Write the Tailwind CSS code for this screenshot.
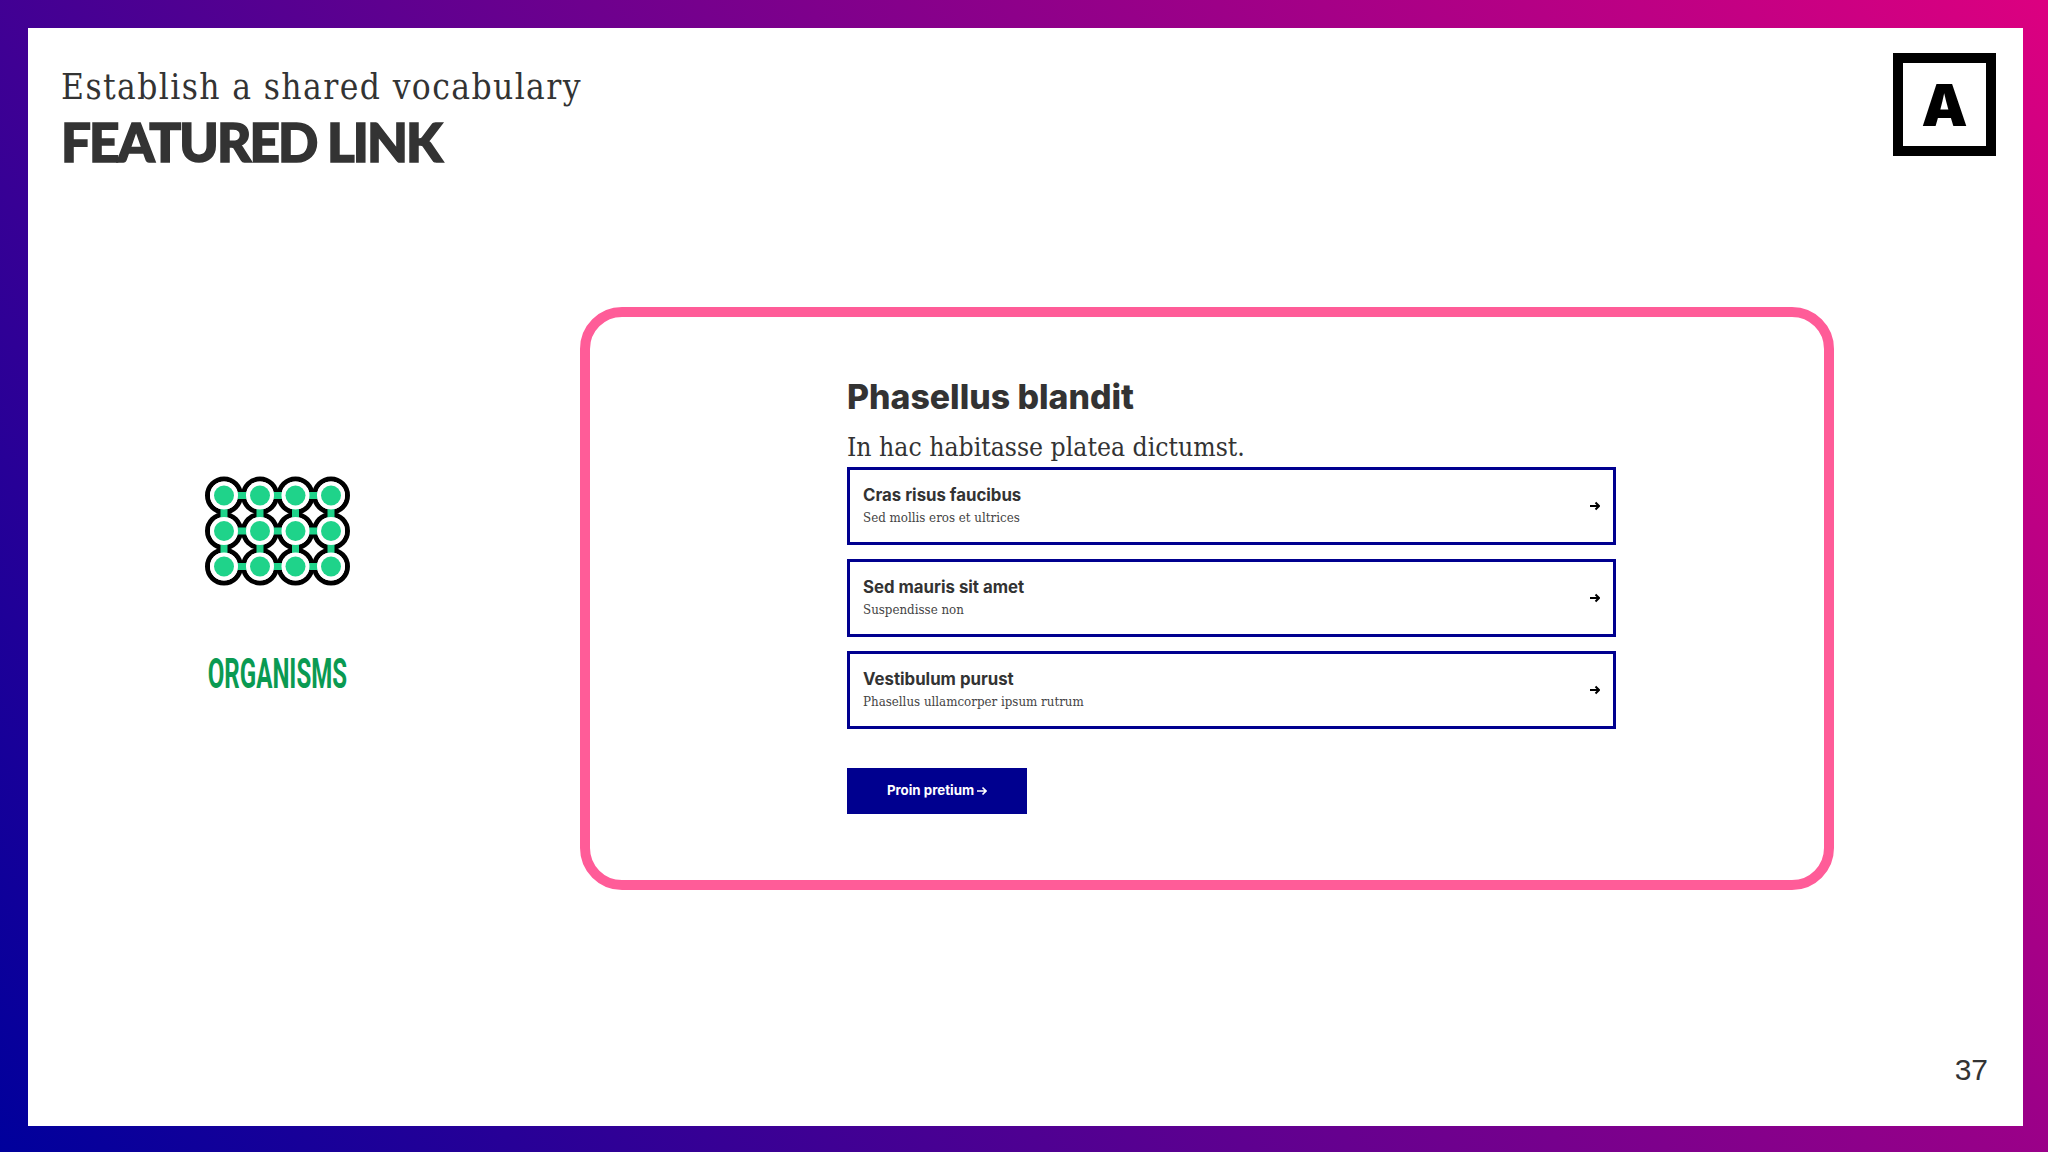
<!DOCTYPE html>
<html>
<head>
<meta charset="utf-8">
<script src="https://cdn.jsdelivr.net/npm/@tailwindcss/browser@4"></script>
</head>
<body class="m-0">
<div class="w-[2048px] h-[1152px] overflow-hidden pt-[28px] pl-[28px] pr-[25px] pb-[26px] bg-[linear-gradient(53deg,#00009c,#dc0080)]">
  <div class="h-full bg-white flex flex-col font-['Liberation_Sans',sans-serif]">
    <header class="h-[128px] flex justify-between items-start pl-[33px] pr-[27px] pt-[25px]">
      <div class="pt-[14px]">
        <p class="font-['DejaVu_Serif_Condensed','DejaVu_Serif',serif] text-[35px] leading-[40px] tracking-[1.4px] text-[#333333]">Establish a shared vocabulary</p>
        <h1 class="font-['Lato',sans-serif] font-black text-[53px] leading-[60px] tracking-[-1.9px] [-webkit-text-stroke:1.5px_#333333] text-[#333333] mt-[5px]">FEATURED LINK</h1>
      </div>
      <div class="w-[103px] h-[103px] border-[10px] border-black flex items-center justify-center font-['Inter',sans-serif] font-black text-[58px] leading-none text-black">A</div>
    </header>
    <main class="flex items-start mt-[151px]">
      <div class="w-[498px] flex flex-col items-center pt-[169px]">
        <svg class="w-[147px] h-[110px]" viewBox="0 0 147 110">
          <g fill="none" stroke="black" stroke-width="5">
            <circle cx="20" cy="19.5" r="16.5"/><circle cx="56" cy="19.5" r="16.5"/><circle cx="91.5" cy="19.5" r="16.5"/><circle cx="127" cy="19.5" r="16.5"/>
            <circle cx="20" cy="55" r="16.5"/><circle cx="56" cy="55" r="16.5"/><circle cx="91.5" cy="55" r="16.5"/><circle cx="127" cy="55" r="16.5"/>
            <circle cx="20" cy="90.5" r="16.5"/><circle cx="56" cy="90.5" r="16.5"/><circle cx="91.5" cy="90.5" r="16.5"/><circle cx="127" cy="90.5" r="16.5"/>
          </g>
          <g stroke="#1fd38a" stroke-width="7">
            <path d="M20 19.5H127M20 55H127M20 90.5H127M20 19.5V90.5M56 19.5V90.5M91.5 19.5V90.5M127 19.5V90.5"/>
          </g>
          <g fill="white">
            <circle cx="20" cy="19.5" r="14"/><circle cx="56" cy="19.5" r="14"/><circle cx="91.5" cy="19.5" r="14"/><circle cx="127" cy="19.5" r="14"/>
            <circle cx="20" cy="55" r="14"/><circle cx="56" cy="55" r="14"/><circle cx="91.5" cy="55" r="14"/><circle cx="127" cy="55" r="14"/>
            <circle cx="20" cy="90.5" r="14"/><circle cx="56" cy="90.5" r="14"/><circle cx="91.5" cy="90.5" r="14"/><circle cx="127" cy="90.5" r="14"/>
          </g>
          <g fill="#1fd38a">
            <circle cx="20" cy="19.5" r="10"/><circle cx="56" cy="19.5" r="10"/><circle cx="91.5" cy="19.5" r="10"/><circle cx="127" cy="19.5" r="10"/>
            <circle cx="20" cy="55" r="10"/><circle cx="56" cy="55" r="10"/><circle cx="91.5" cy="55" r="10"/><circle cx="127" cy="55" r="10"/>
            <circle cx="20" cy="90.5" r="10"/><circle cx="56" cy="90.5" r="10"/><circle cx="91.5" cy="90.5" r="10"/><circle cx="127" cy="90.5" r="10"/>
          </g>
        </svg>
        <p class="font-['Roboto',sans-serif] font-bold text-[43px] leading-[50px] text-[#0a9a52] mt-[62px] scale-x-[0.56]">ORGANISMS</p>
      </div>
      <section class="ml-[54px] w-[1254px] h-[583px] border-[10px] border-[#ff5c98] rounded-[42px] pl-[257px] pt-[60px]">
        <h2 class="font-['Inter',sans-serif] font-extrabold text-[33.8px] leading-[40px] text-[#333333]">Phasellus blandit</h2>
        <p class="font-['DejaVu_Serif_Condensed','DejaVu_Serif',serif] text-[26.3px] leading-[32px] text-[#333333] mt-[14px] mb-[4px]">In hac habitasse platea dictumst.</p>
        <ul class="w-[769px] flex flex-col gap-[14px]">
          <li class="h-[78px] border-[3.5px] border-[#00008f] flex items-center justify-between pl-[13px] pr-[13px]">
            <div class="pb-[1px]"><p class="font-['Inter',sans-serif] font-bold text-[16.8px] leading-[22px] text-[#333333]">Cras risus faucibus</p><p class="font-['DejaVu_Serif_Condensed','DejaVu_Serif',serif] text-[13.2px] leading-[20px] text-[#444444] mt-[2px]">Sed mollis eros et ultrices</p></div>
            <svg class="w-[10px] h-[10px]" viewBox="0 0 10 10" fill="none" stroke="black" stroke-width="2"><path d="M0 5H9M5.5 1.5L9 5L5.5 8.5"/></svg>
          </li>
          <li class="h-[78px] border-[3.5px] border-[#00008f] flex items-center justify-between pl-[13px] pr-[13px]">
            <div class="pb-[1px]"><p class="font-['Inter',sans-serif] font-bold text-[16.8px] leading-[22px] text-[#333333]">Sed mauris sit amet</p><p class="font-['DejaVu_Serif_Condensed','DejaVu_Serif',serif] text-[13.2px] leading-[20px] text-[#444444] mt-[2px]">Suspendisse non</p></div>
            <svg class="w-[10px] h-[10px]" viewBox="0 0 10 10" fill="none" stroke="black" stroke-width="2"><path d="M0 5H9M5.5 1.5L9 5L5.5 8.5"/></svg>
          </li>
          <li class="h-[78px] border-[3.5px] border-[#00008f] flex items-center justify-between pl-[13px] pr-[13px]">
            <div class="pb-[1px]"><p class="font-['Inter',sans-serif] font-bold text-[16.8px] leading-[22px] text-[#333333]">Vestibulum purust</p><p class="font-['DejaVu_Serif_Condensed','DejaVu_Serif',serif] text-[13.2px] leading-[20px] text-[#444444] mt-[2px]">Phasellus ullamcorper ipsum rutrum</p></div>
            <svg class="w-[10px] h-[10px]" viewBox="0 0 10 10" fill="none" stroke="black" stroke-width="2"><path d="M0 5H9M5.5 1.5L9 5L5.5 8.5"/></svg>
          </li>
        </ul>
        <div class="mt-[39px] w-[180px] h-[46px] bg-[#00008f] flex items-center justify-center gap-[3px] font-['Inter',sans-serif] font-bold text-[13.3px] text-white">Proin pretium
          <svg class="w-[10px] h-[10px]" viewBox="0 0 10 10" fill="none" stroke="white" stroke-width="1.6"><path d="M0 5H9M5.5 1.5L9 5L5.5 8.5"/></svg>
        </div>
      </section>
    </main>
    <footer class="flex justify-end pr-[35px] mt-[162px]">
      <span class="text-[30px] leading-[36px] text-[#333333]">37</span>
    </footer>
  </div>
</div>
</body>
</html>
